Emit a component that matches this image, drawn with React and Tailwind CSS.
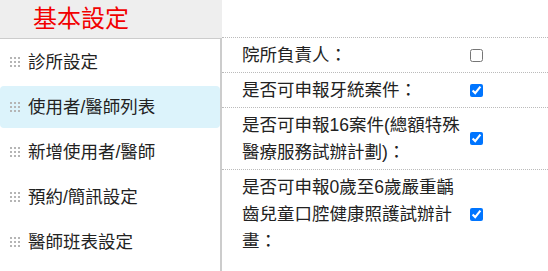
import React from "react";

const menu = [
  { label: "診所設定" },
  { label: "使用者/醫師列表", active: true },
  { label: "新增使用者/醫師" },
  { label: "預約/簡訊設定" },
  { label: "醫師班表設定" },
];

const rows = [
  { label: "院所負責人：", checked: false },
  { label: "是否可申報牙統案件：", checked: true },
  { label: "是否可申報16案件(總額特殊醫療服務試辦計劃)：", checked: true },
  { label: "是否可申報0歲至6歲嚴重齲齒兒童口腔健康照護試辦計畫：", checked: true },
];

function DragHandle() {
  return (
    <svg width="10" height="10" viewBox="0 0 10 10" className="shrink-0">
      {[0, 4, 8].map((y) =>
        [0, 4, 8].map((x) => (
          <rect key={x + "-" + y} x={x} y={y} width="2" height="2" fill="#b5b5b5" />
        ))
      )}
    </svg>
  );
}

export default function App() {
  return (
    <div
      className="flex h-screen bg-white text-[#222]"
      style={{ fontFamily: '"Liberation Sans", "Noto Sans CJK TC", sans-serif' }}
    >
      {/* 左側選單 */}
      <aside className="flex w-[222px] shrink-0 flex-col">
        <div className="flex h-[38px] items-center bg-[#eeeeee] pl-[33px] text-[24px] leading-none text-[#f20000]">
          基本設定
        </div>
        <nav className="flex flex-1 flex-col gap-[3px] border-t border-r-2 border-[#cccccc] pt-[2px]">
          {menu.map((item) => (
            <div
              key={item.label}
              className={
                "flex h-[42px] items-center gap-2 rounded-[4px] pl-[10px] text-[17.5px] " +
                (item.active ? "bg-[#dcf3fb]" : "")
              }
            >
              <DragHandle />
              <span>{item.label}</span>
            </div>
          ))}
        </nav>
      </aside>

      {/* 右側設定表 */}
      <section className="flex-1 pt-[37px]">
        {rows.map((row) => (
          <div key={row.label} className="flex items-center border-t border-dotted border-[#bbbbbb]">
            <div className="w-[248px] shrink-0 py-[3.5px] pl-5 pr-2 text-[17.5px] leading-[27px]">
              {row.label}
            </div>
            <input
              type="checkbox"
              defaultChecked={row.checked}
              className="h-[13px] w-[13px]"
            />
          </div>
        ))}
      </section>
    </div>
  );
}
